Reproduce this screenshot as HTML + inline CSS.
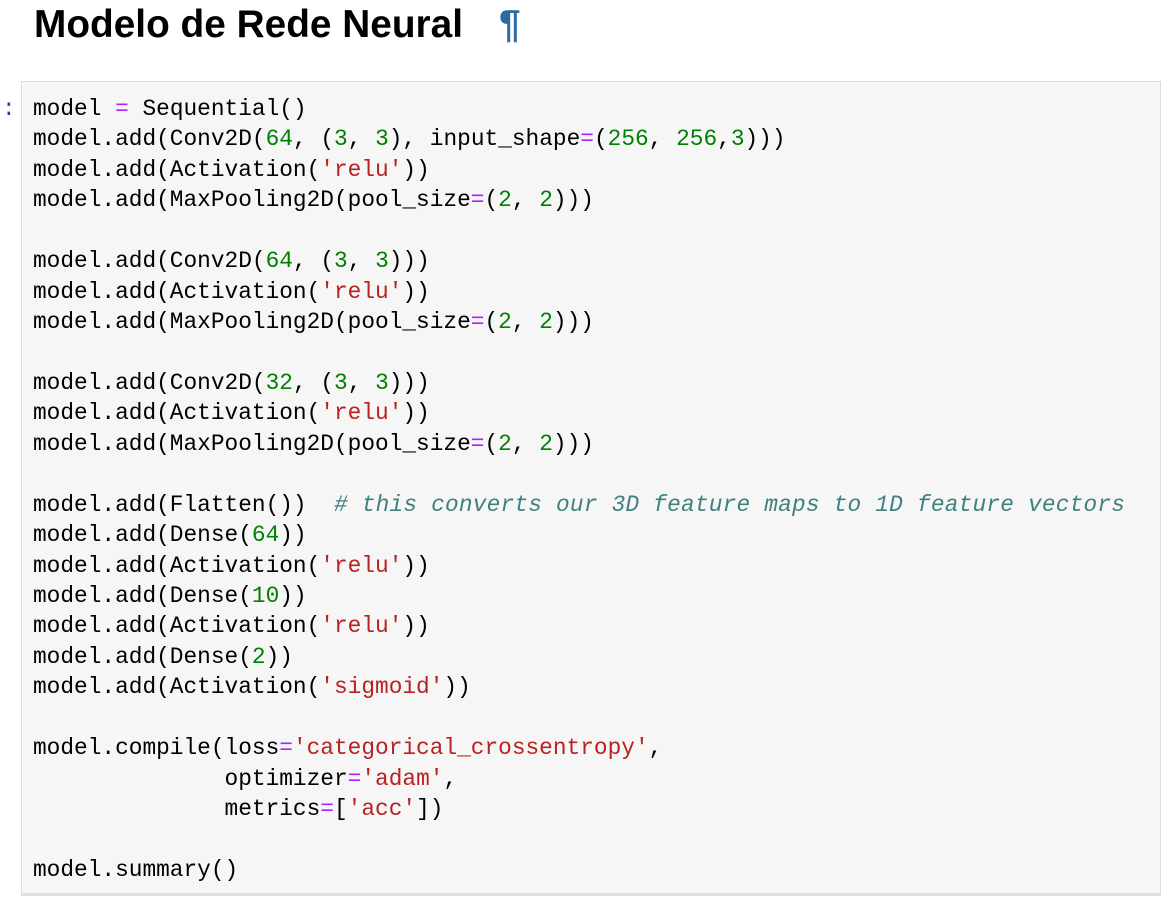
<!DOCTYPE html>
<html><head><meta charset="utf-8"><style>
html,body{margin:0;padding:0;background:#fff;width:1168px;height:905px;overflow:hidden}
h1{position:absolute;left:34px;top:1px;margin:0;font:bold 38.8px/48px "Liberation Sans",sans-serif;color:#000}
h1 span{color:#2a6aa5;margin-left:36px}
.p{position:absolute;left:2px;top:96px;font:22.8px "Liberation Mono",monospace;color:#303f9f}
.box{position:absolute;left:21px;top:81px;width:1138px;height:811px;background:#f6f6f6;border:1px solid #dcdcdc;border-bottom:3px solid #e0e0e0}
pre{position:absolute;left:11px;top:12px;margin:0;font:22.8px/30.44px "Liberation Mono",monospace;color:#000}
.o{color:#aa22ff}.n{color:#008000}.s{color:#ba2121}.c{color:#408080;font-style:italic;letter-spacing:0.2px}
</style></head><body>
<h1>Modelo de Rede Neural<span>¶</span></h1>
<div class="p">:</div>
<div class="box"><pre>model <span class="o">=</span> Sequential()
model.add(Conv2D(<span class="n">64</span>, (<span class="n">3</span>, <span class="n">3</span>), input_shape<span class="o">=</span>(<span class="n">256</span>, <span class="n">256</span>,<span class="n">3</span>)))
model.add(Activation(<span class="s">'relu'</span>))
model.add(MaxPooling2D(pool_size<span class="o">=</span>(<span class="n">2</span>, <span class="n">2</span>)))

model.add(Conv2D(<span class="n">64</span>, (<span class="n">3</span>, <span class="n">3</span>)))
model.add(Activation(<span class="s">'relu'</span>))
model.add(MaxPooling2D(pool_size<span class="o">=</span>(<span class="n">2</span>, <span class="n">2</span>)))

model.add(Conv2D(<span class="n">32</span>, (<span class="n">3</span>, <span class="n">3</span>)))
model.add(Activation(<span class="s">'relu'</span>))
model.add(MaxPooling2D(pool_size<span class="o">=</span>(<span class="n">2</span>, <span class="n">2</span>)))

model.add(Flatten())  <span class="c"># this converts our 3D feature maps to 1D feature vectors</span>
model.add(Dense(<span class="n">64</span>))
model.add(Activation(<span class="s">'relu'</span>))
model.add(Dense(<span class="n">10</span>))
model.add(Activation(<span class="s">'relu'</span>))
model.add(Dense(<span class="n">2</span>))
model.add(Activation(<span class="s">'sigmoid'</span>))

model.compile(loss<span class="o">=</span><span class="s">'categorical_crossentropy'</span>,
              optimizer<span class="o">=</span><span class="s">'adam'</span>,
              metrics<span class="o">=</span>[<span class="s">'acc'</span>])

model.summary()</pre></div>
</body></html>
